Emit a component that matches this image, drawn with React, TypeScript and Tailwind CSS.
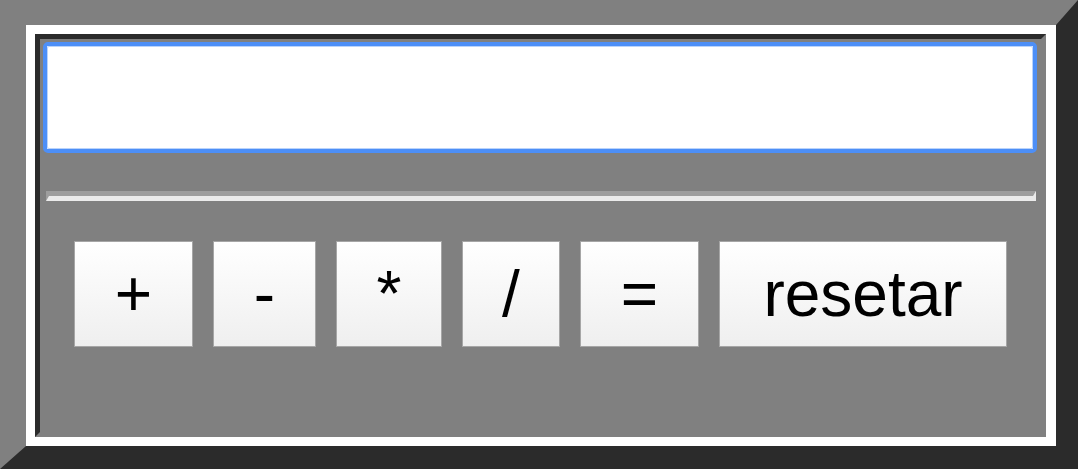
import React from 'react';

const keys = [
  { label: '+', w: 'w-[119px]' },
  { label: '-', w: 'w-[103px]' },
  { label: '*', w: 'w-[106px]' },
  { label: '/', w: 'w-[98px]' },
  { label: '=', w: 'w-[119px]' },
  { label: 'resetar', w: 'w-[288px]' },
];

export default function App() {
  return (
    <div
      className="box-border h-[469px] w-[1078px] border-solid border-t-[25px] border-l-[26px] border-r-[22px] border-b-[23px] border-t-[#808080] border-l-[#808080] border-r-[#2b2b2b] border-b-[#2b2b2b] bg-white pt-[9px] pl-[9px] pb-[9px] pr-[10px]"
      style={{ fontFamily: '"Liberation Sans", Arial, sans-serif' }}
    >
      <div className="box-border flex h-full flex-col border-solid border-[5px] border-t-[#2b2b2b] border-l-[#2b2b2b] border-r-[#808080] border-b-[#808080] bg-[#808080]">
        <div className="ml-[3px] mt-[3px] h-[111px] w-[994px] rounded-[5px] border-[4px] border-[#4d8ff7] bg-white">
          <input
            readOnly
            className="box-border h-full w-full rounded-[2px] border border-[#b9d3fb] bg-white px-2 text-[40px] outline-none"
          />
        </div>

        <hr className="ml-[6px] mt-[38px] box-border h-[10px] w-[990px] border-solid border-t-[5px] border-b-[5px] border-l-[3px] border-r-[3px] border-t-[#9e9e9e] border-l-[#9e9e9e] border-b-[#ebebeb] border-r-[#ebebeb]" />

        <div className="ml-[34px] mt-[40px] flex gap-[20px]">
          {keys.map((k) => (
            <button
              key={k.label}
              className={`${k.w} box-border flex h-[106px] items-center justify-center border border-[#a6a6a6] bg-gradient-to-b from-white to-[#efefef] text-[64px] leading-none text-black`}
            >
              {k.label}
            </button>
          ))}
        </div>
      </div>
    </div>
  );
}
